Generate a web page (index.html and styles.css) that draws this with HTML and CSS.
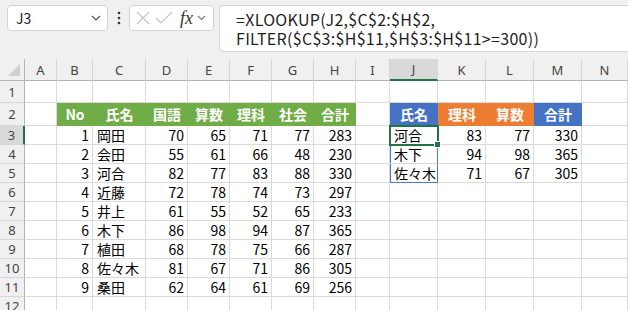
FILE: index.html
```html
<!DOCTYPE html>
<html lang="ja">
<head>
  <meta charset="UTF-8" />
  <title>XLOOKUP FILTER</title>
  <link rel="stylesheet" href="styles.css">
</head>
<body>

  <div class="toolbar">
    <div class="namebox">
      <span>J3</span>
      <svg width="10" height="6" viewBox="0 0 10 6"><polyline points="1,1 5,5 9,1" fill="none" stroke="#555" stroke-width="1.2"/></svg>
    </div>
    <div class="dots">
      <svg width="4" height="14" viewBox="0 0 4 14"><circle cx="2" cy="2" r="1.3" fill="#333"/><circle cx="2" cy="7" r="1.3" fill="#333"/><circle cx="2" cy="12" r="1.3" fill="#333"/></svg>
    </div>
    <div class="fnbox">
      <svg width="16" height="16" viewBox="0 0 16 16"><path d="M2 2 L14 14 M14 2 L2 14" stroke="#c4c4c4" stroke-width="1.2" fill="none"/></svg>
      <svg width="18" height="16" viewBox="0 0 18 16"><polyline points="1,8 6,13 17,2" stroke="#c4c4c4" stroke-width="1.2" fill="none"/></svg>
      <span class="fx">fx</span>
      <svg width="9" height="6" viewBox="0 0 9 6"><polyline points="1,1 4.5,4.5 8,1" fill="none" stroke="#777" stroke-width="1.1"/></svg>
    </div>
    <div class="formula">=XLOOKUP(J2,$C$2:$H$2,<br>FILTER($C$3:$H$11,$H$3:$H$11&gt;=300))</div>
  </div>

  <div class="sheet" id="sheet"></div>

  <script>
    const COLS = ['A','B','C','D','E','F','G','H','I','J','K','L','M','N'];
    const heads = ['No','氏名','国語','算数','理科','社会','合計'];
    const scores = [
      [1,'岡田',70,65,71,77,283],
      [2,'会田',55,61,66,48,230],
      [3,'河合',82,77,83,88,330],
      [4,'近藤',72,78,74,73,297],
      [5,'井上',61,55,52,65,233],
      [6,'木下',86,98,94,87,365],
      [7,'植田',68,78,75,66,287],
      [8,'佐々木',81,67,71,86,305],
      [9,'桑田',62,64,61,69,256]
    ];
    const result = [
      ['河合',83,77,330],
      ['木下',94,98,365],
      ['佐々木',71,67,305]
    ];

    const sheet = document.getElementById('sheet');

    function cell(text, cls) {
      const d = document.createElement('div');
      d.className = cls;
      if (text !== '' && text !== undefined) d.textContent = text;
      sheet.appendChild(d);
    }

    // column headers
    cell('', 'corner');
    COLS.forEach(c => cell(c, c === 'J' ? 'hd sel' : 'hd'));

    for (let r = 1; r <= 12; r++) {
      cell(r, r === 3 ? 'rh sel' : 'rh');
      for (let i = 0; i < COLS.length; i++) {
        const col = COLS[i];
        let text = '', cls = 'c';

        if (r === 2) {
          if (i >= 1 && i <= 7) { text = heads[i - 1]; cls += ' th green'; }
          if (col === 'J') { text = '氏名'; cls += ' th blue'; }
          if (col === 'K') { text = '理科'; cls += ' th orange'; }
          if (col === 'L') { text = '算数'; cls += ' th orange'; }
          if (col === 'M') { text = '合計'; cls += ' th blue'; }
        } else if (r >= 3 && r <= 11) {
          const row = scores[r - 3];
          if (i >= 1 && i <= 7) {
            text = row[i - 1];
            if (i !== 2) cls += ' num';
          }
          const res = result[r - 3];
          if (res && i >= 9 && i <= 12) {
            text = res[i - 9];
            if (i !== 9) cls += ' num';
          }
          if (col === 'J' && res) {
            cls += ' spill';
            if (r === 3) cls += ' active';
            if (r === 5) cls += ' spill-end';
          }
        }
        cell(text, cls);
      }
    }
  </script>
</body>
</html>
```

FILE: styles.css
```css
body {
  margin: 0;
  background: #f0f0f0;
  font-family: "Noto Sans CJK JP", "Noto Sans", sans-serif;
  width: 628px;
  height: 310px;
  overflow: hidden;
}

.toolbar {
  display: flex;
  align-items: flex-start;
  height: 59px;
  padding: 5px 0 0 7px;
  box-sizing: border-box;
}

.toolbar > div {
  flex-shrink: 0;
}

.namebox {
  width: 101px;
  height: 26px;
  box-sizing: border-box;
  background: #fff;
  border: 1px solid #d4d4d4;
  border-radius: 4px;
  display: flex;
  align-items: center;
  justify-content: space-between;
  padding: 0 6px 0 8px;
  font-size: 14px;
  color: #222;
}

.dots {
  width: 21px;
  height: 26px;
  display: flex;
  align-items: center;
  justify-content: center;
}

.fnbox {
  width: 85px;
  height: 26px;
  box-sizing: border-box;
  background: #fff;
  border: 1px solid #d4d4d4;
  border-radius: 4px;
  display: flex;
  align-items: center;
  gap: 4px;
  padding: 0 3px 0 5px;
}

.fx {
  font-family: "Liberation Serif", serif;
  font-style: italic;
  font-size: 18px;
  color: #333;
  margin-left: 3px;
  line-height: 1;
}

.formula {
  width: 430px;
  height: 47px;
  box-sizing: border-box;
  margin-left: 5px;
  background: #fff;
  border: 1px solid #d4d4d4;
  border-radius: 4px;
  padding: 4px 0 0 16px;
  font-size: 16px;
  letter-spacing: 0.3px;
  line-height: 19px;
  color: #1f1f1f;
  white-space: nowrap;
}

.sheet {
  display: grid;
  grid-template-columns: 25px 32px 36px 53px 42px 42px 42px 42px 42px 34px 48px 48px 48px 48px 46px;
  grid-template-rows: 22px 22px 23px repeat(9, 19px) 19px;
  font-size: 14px;
}

.sheet > div {
  box-sizing: border-box;
  display: flex;
  align-items: center;
  white-space: nowrap;
  overflow: hidden;
}

.corner {
  background: #f0f0f0;
  border-right: 1px solid #b4b4b4;
  border-bottom: 1px solid #b4b4b4;
  justify-content: flex-end;
  align-items: flex-end !important;
  padding: 0 4px 4px 0;
}

.corner::after {
  content: "";
  width: 0;
  height: 0;
  border-left: 12px solid transparent;
  border-bottom: 12px solid #cfcfcf;
}

.hd {
  background: #f0f0f0;
  border-right: 1px solid #d6d6d6;
  border-bottom: 1px solid #b4b4b4;
  justify-content: center;
  font-family: "Noto Sans", sans-serif;
  font-size: 13px;
  color: #444;
}

.rh {
  background: #f0f0f0;
  border-right: 1px solid #b4b4b4;
  border-bottom: 1px solid #d6d6d6;
  justify-content: center;
  font-family: "Noto Sans", sans-serif;
  font-size: 13px;
  color: #444;
}

.hd.sel {
  background: #d9d9d9;
  border-bottom: 2px solid #217346;
}

.rh.sel {
  background: #d9d9d9;
  border-right: 2px solid #217346;
}

.c {
  background: #fff;
  border-right: 1px solid #dadada;
  border-bottom: 1px solid #dadada;
  padding: 0 3px 0 4px;
  color: #000;
}

.num {
  justify-content: flex-end;
}

.th {
  justify-content: center;
  align-items: flex-end !important;
  padding-bottom: 1px;
  color: #fff;
  font-weight: bold;
}

.green {
  background: #70ad47;
  border-color: #70ad47;
}

.blue {
  background: #4472c4;
  border-color: #4472c4;
}

.orange {
  background: #ed7d31;
  border-color: #ed7d31;
}

.spill {
  border-right-color: #4a78c8;
  box-shadow: inset 1px 0 0 #4a78c8;
}

.spill-end {
  border-bottom-color: #4a78c8;
}

.active {
  position: relative;
  overflow: visible !important;
  outline: 2px solid #217346;
  outline-offset: -1px;
  z-index: 1;
}

.active::after {
  content: "";
  position: absolute;
  right: -4px;
  bottom: -4px;
  width: 5px;
  height: 5px;
  background: #217346;
  border: 1px solid #fff;
}
```
